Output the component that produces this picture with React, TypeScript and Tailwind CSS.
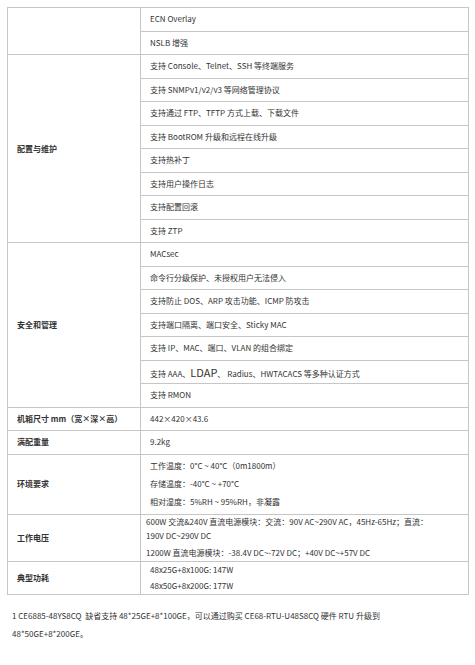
import type { ReactNode } from 'react';

type Group = { label: string; rows: ReactNode[] };

const groups: Group[] = [
  { label: '', rows: ['ECN Overlay', 'NSLB 增强'] },
  {
    label: '配置与维护',
    rows: [
      '支持 Console、Telnet、SSH 等终端服务',
      '支持 SNMPv1/v2/v3 等网络管理协议',
      '支持通过 FTP、TFTP 方式上载、下载文件',
      '支持 BootROM 升级和远程在线升级',
      '支持热补丁',
      '支持用户操作日志',
      '支持配置回滚',
      '支持 ZTP',
    ],
  },
  {
    label: '安全和管理',
    rows: [
      'MACsec',
      '命令行分级保护、未授权用户无法侵入',
      '支持防止 DOS、ARP 攻击功能、ICMP 防攻击',
      '支持端口隔离、端口安全、Sticky MAC',
      '支持 IP、MAC、端口、VLAN 的组合绑定',
      <>
        支持 AAA、<span className="text-[11px]">LDAP</span>、 Radius、HWTACACS 等多种认证方式
      </>,
      '支持 RMON',
    ],
  },
];

const line = 'border-[#c6c6c6]';

export default function App() {
  return (
    <div className="min-h-[665px] w-[475px] bg-white pt-[7px] pl-[7px] font-['Noto_Sans_CJK_SC','Noto_Sans',sans-serif] text-[8px] text-[#333]">
      <table className="w-[462px] border-collapse border border-[#bcbcbc]">
        <colgroup>
          <col className="w-[133px]" />
          <col />
        </colgroup>
        <tbody>
          {groups.map((g) =>
            g.rows.map((r, i) => (
              <tr key={`${g.label}-${i}`} className="h-[23.5px]">
                {i === 0 && (
                  <td rowSpan={g.rows.length} className={`border ${line} pl-[9px] align-middle font-bold`}>
                    {g.label}
                  </td>
                )}
                <td className={`border ${line} pl-[9px] align-middle whitespace-nowrap`}>{r}</td>
              </tr>
            ))
          )}

          <tr className="h-[23.5px]">
            <td className={`border ${line} pl-[9px] font-bold`}>机箱尺寸 mm（宽×深×高）</td>
            <td className={`border ${line} pl-[9px]`}>442×420×43.6</td>
          </tr>
          <tr className="h-[23.5px]">
            <td className={`border ${line} pl-[9px] font-bold`}>满配重量</td>
            <td className={`border ${line} pl-[9px]`}>9.2kg</td>
          </tr>

          {/* 环境要求 */}
          <tr className="h-[60.5px]">
            <td className={`border ${line} pl-[9px] font-bold`}>环境要求</td>
            <td className={`border ${line} pl-[9px] leading-[18px]`}>
              <div>工作温度：0°C ~ 40°C（0m1800m）</div>
              <div>存储温度：-40°C ~ +70°C</div>
              <div>相对湿度：5%RH ~ 95%RH，非凝露</div>
            </td>
          </tr>

          {/* 工作电压 */}
          <tr className="h-[46.5px]">
            <td className={`border ${line} pl-[9px] font-bold`}>工作电压</td>
            <td className={`border ${line} pl-[5px] align-top leading-[14px] whitespace-nowrap`}>
              <div>
                600W 交流&amp;240V 直流电源模块：交流：90V AC~290V AC，45Hz-65Hz；直流：
                <br />
                190V DC~290V DC
              </div>
              <div className="mt-[3px]">1200W 直流电源模块：-38.4V DC~-72V DC；+40V DC~+57V DC</div>
            </td>
          </tr>

          {/* 典型功耗 */}
          <tr className="h-[32px]">
            <td className={`border ${line} pl-[9px] font-bold`}>典型功耗</td>
            <td className={`border ${line} pl-[9px] align-top leading-[16px]`}>
              <div>48x25G+8x100G: 147W</div>
              <div>48x50G+8x200G: 177W</div>
            </td>
          </tr>
        </tbody>
      </table>

      <p className="mt-[12px] pl-[5px] leading-[18px]">
        1 CE6885-48YS8CQ&nbsp;&nbsp;缺省支持 48*25GE+8*100GE，可以通过购买 CE68-RTU-U48S8CQ 硬件 RTU 升级到
        <br />
        48*50GE+8*200GE。
      </p>
    </div>
  );
}
